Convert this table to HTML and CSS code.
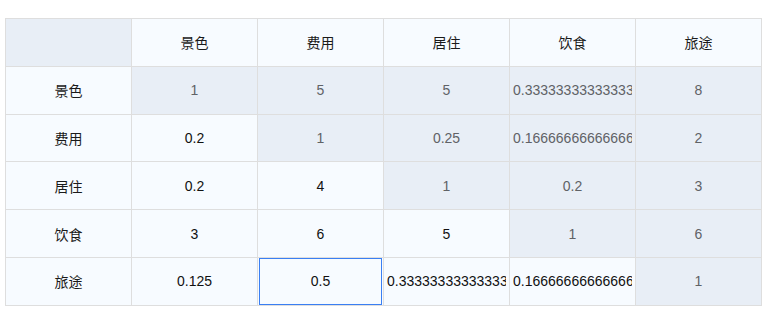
FILE: index.html
```html
<!DOCTYPE html>
<html lang="zh">
<head>
<meta charset="utf-8">
<link rel="stylesheet" href="styles.css">
</head>
<body>
<div class="wrap">
<table class="matrix">
  <tr class="head">
    <th class="ro"></th>
    <th>景色</th><th>费用</th><th>居住</th><th>饮食</th><th>旅途</th>
  </tr>
  <tr>
    <th>景色</th>
    <td class="ro"><input value="1" readonly></td>
    <td class="ro"><input value="5" readonly></td>
    <td class="ro"><input value="5" readonly></td>
    <td class="ro"><input value="0.3333333333333333" readonly></td>
    <td class="ro"><input value="8" readonly></td>
  </tr>
  <tr>
    <th>费用</th>
    <td><input value="0.2"></td>
    <td class="ro"><input value="1" readonly></td>
    <td class="ro"><input value="0.25" readonly></td>
    <td class="ro"><input value="0.16666666666666666" readonly></td>
    <td class="ro"><input value="2" readonly></td>
  </tr>
  <tr>
    <th>居住</th>
    <td><input value="0.2"></td>
    <td><input value="4"></td>
    <td class="ro"><input value="1" readonly></td>
    <td class="ro"><input value="0.2" readonly></td>
    <td class="ro"><input value="3" readonly></td>
  </tr>
  <tr>
    <th>饮食</th>
    <td><input value="3"></td>
    <td><input value="6"></td>
    <td><input value="5"></td>
    <td class="ro"><input value="1" readonly></td>
    <td class="ro"><input value="6" readonly></td>
  </tr>
  <tr>
    <th>旅途</th>
    <td><input value="0.125"></td>
    <td class="active"><input value="0.5"></td>
    <td><input value="0.3333333333333333"></td>
    <td><input value="0.16666666666666666"></td>
    <td class="ro"><input value="1" readonly></td>
  </tr>
</table>
</div>
</body>
</html>
```

FILE: styles.css
```css
html, body {
  margin: 0;
  padding: 0;
  background: #ffffff;
}
.wrap {
  padding: 18px 0 0 5px;
}
.matrix {
  border-collapse: collapse;
  table-layout: fixed;
  width: 757px;
  font-family: "Liberation Sans", Arial, "Noto Sans CJK SC", sans-serif;
  font-size: 14px;
  color: #1f1f1f;
}
.matrix th,
.matrix td {
  border: 1px solid #dedede;
  height: 46.8px;
  padding: 0;
  text-align: center;
  vertical-align: middle;
  background: #f7fbff;
  font-weight: normal;
}
.matrix th {
  font-family: "Noto Sans CJK SC", "Liberation Sans", sans-serif;
  color: #1a1a1a;
}
.matrix .ro {
  background: #e8eef6;
}
.matrix input {
  display: block;
  box-sizing: border-box;
  width: 100%;
  height: 46.8px;
  margin: 0;
  padding: 0 2px;
  border: 1px solid transparent;
  background: transparent;
  font-family: "Liberation Sans", Arial, sans-serif;
  font-size: 14px;
  color: #111111;
  text-align: center;
  outline: none;
}
.matrix .ro input {
  color: #606266;
}
.matrix .active input {
  width: calc(100% - 2px);
  margin: 0 1px;
  border-color: #3a7ff3;
}
```
